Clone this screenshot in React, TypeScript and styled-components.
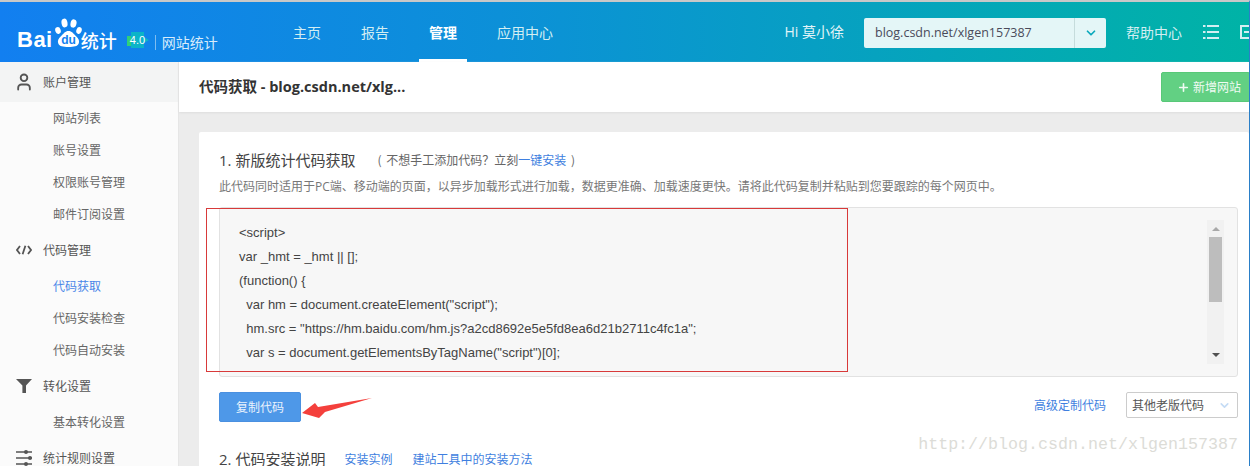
import styled, { createGlobalStyle } from 'styled-components';
import { ChevronDown, Plus, User } from 'lucide-react';

const GlobalStyle = createGlobalStyle`
	html, body {
		margin: 0;
		padding: 0;
		width: 1250px;
		height: 466px;
		overflow: hidden;
		background: #ececec;
		font-family: 'Open Sans', 'Noto Sans CJK SC', sans-serif;
	}
	* { box-sizing: border-box; }
`;

const Page = styled.div`
	position: relative;
	width: 1250px;
	height: 466px;
	overflow: hidden;
	border-top: 2px solid #c8c8c8;
	border-right: 1px solid #2a7fc8;
	display: flex;
	flex-direction: column;
`;

const Header = styled.header`
	height: 60px;
	flex: none;
	display: flex;
	align-items: stretch;
	color: #dff3f5;
	background: linear-gradient(90deg, #127ff0 0%, #0c90d8 40%, #05a5bb 75%, #00b3a6 100%);
`;

const Logo = styled.div`
	width: 283px;
	flex: none;
	display: flex;
	align-items: flex-start;
	padding: 16px 0 0 17px;
	color: #fff;
`;

const LogoWord = styled.span`
	margin-top: 11px;
	font: bold 22px/22px 'Liberation Sans', sans-serif;
	letter-spacing: 0.5px;
`;

const LogoCn = styled.span`
	margin: 11px 0 0 -1px;
	font: 500 18px/22px 'Noto Sans CJK SC', sans-serif;
`;

const VersionBadge = styled.svg`
	margin: 14px 6px 0 10px;
	flex: none;
`;

const ProductName = styled.span`
	margin-top: 17px;
	padding-left: 6px;
	font: 14px/15px 'Noto Sans CJK SC', sans-serif;
	color: #d8ecfb;
	border-left: 1px solid #7fbdf0;
`;

const Nav = styled.nav`
	display: flex;
	flex: 1;
	gap: 20px;
`;

const NavItem = styled.a<{ $active?: boolean }>`
	padding: 0 10px;
	font: ${(p) => (p.$active ? 'bold' : 'normal')} 14px/60px 'Noto Sans CJK SC', sans-serif;
	color: ${(p) => (p.$active ? '#fff' : '#d3eef2')};
	border-bottom: ${(p) => (p.$active ? '3px solid #fff' : 'none')};
`;

const Hello = styled.span`
	font: 14px/60px 'Open Sans', 'Noto Sans CJK SC', sans-serif;
	margin-right: 20px;
	color: #e3f4f8;
`;

const SiteSelect = styled.div`
	width: 242px;
	height: 30px;
	margin-top: 16px;
	margin-right: 20px;
	display: flex;
	background: #e4f6f7;
	border-radius: 2px;
	color: #4a4a5a;
	font-size: 12.5px;
	line-height: 30px;
`;

const SiteName = styled.span`
	flex: 1;
	padding-left: 11px;
	border-right: 1px solid #c5dcdc;
`;

const SiteArrow = styled.span`
	width: 31px;
	display: flex;
	align-items: center;
	justify-content: center;
	color: #0ba9bc;
`;

const HelpLink = styled.span`
	font: 14px/60px 'Noto Sans CJK SC', sans-serif;
	color: #d3eef2;
	margin-right: 21px;
`;

const HeaderIcon = styled.svg`
	flex: none;
	margin-top: 23px;
	margin-left: 0;
	color: #d3eef2;
`;

const ExitIcon = styled(HeaderIcon)`
	margin-left: 21px;
	margin-right: -9px;
`;

const Body = styled.div`
	flex: 1;
	display: flex;
	min-height: 0;
`;

const Sidebar = styled.aside`
	width: 179px;
	flex: none;
	background: #fbfbfb;
	border-right: 1px solid #e6e6e6;
`;

const GroupTitle = styled.div<{ $first?: boolean }>`
	height: 40px;
	display: flex;
	align-items: center;
	background: ${(p) => (p.$first ? '#f3f4f4' : 'transparent')};
	font: 12px/20px 'Noto Sans CJK SC', sans-serif;
	color: #555;
`;

const GroupIcon = styled.span<{ $left?: number }>`
	width: 43px;
	padding-left: ${(p) => p.$left ?? 16}px;
	display: flex;
	color: #555;
`;

const SideLink = styled.a<{ $active?: boolean }>`
	display: block;
	height: 32px;
	padding-left: 53px;
	font: 12px/32px 'Noto Sans CJK SC', sans-serif;
	color: ${(p) => (p.$active ? '#4a86e8' : '#666')};
`;

const Main = styled.main`
	flex: 1;
	min-width: 0;
`;

const TitleBar = styled.div`
	height: 50px;
	background: #fff;
	box-shadow: 0 1px 2px #dedede;
	display: flex;
	align-items: center;
	justify-content: space-between;
	padding-left: 20px;
	font: bold 14.5px/20px 'Open Sans', 'Noto Sans CJK SC', sans-serif;
	color: #333;
`;

const AddButton = styled.a`
	width: 89px;
	height: 30px;
	margin-right: -1px;
	display: flex;
	align-items: center;
	padding-left: 15px;
	gap: 3px;
	background: #62d083;
	border: 1px solid #58c878;
	border-radius: 2px;
	color: #f0fbf3;
	font: 12px/28px 'Noto Sans CJK SC', sans-serif;
`;

const Card = styled.section`
	margin: 20px 0 0 20px;
	height: 400px;
	background: #fff;
	border-radius: 2px;
	padding: 18px 11px 0 20px;
`;

const HeadRow = styled.div`
	display: flex;
	align-items: center;
	height: 20px;
`;

const SectionTitle = styled.h2`
	margin: 0;
	font: normal 15px/20px 'Open Sans', 'Noto Sans CJK SC', sans-serif;
	color: #444;
`;

const Hint = styled.span`
	margin-left: 22px;
	font: 12px/20px 'Noto Sans CJK SC', sans-serif;
	word-spacing: 2px;
	color: #666;
`;

const BlueLink = styled.a`
	color: #3f7fe0;
	font: 12px/20px 'Noto Sans CJK SC', sans-serif;
`;

const Description = styled.p`
	margin: 9px 0 0;
	font: 12px/16px 'Open Sans', 'Noto Sans CJK SC', sans-serif;
	color: #777;
`;

const CodeWrap = styled.div`
	position: relative;
	margin-top: 12px;
	height: 170px;
`;

const CodeBox = styled.div`
	height: 170px;
	display: flex;
	background: #f7f7f7;
	border: 1px solid #e2e2e2;
	border-radius: 3px;
	padding: 12px 13px 0 19px;
`;

const Code = styled.pre`
	flex: 1;
	margin: 1px 0 0;
	font: 13px/24px 'Liberation Sans', sans-serif;
	color: #444;
`;

const Scrollbar = styled.div`
	width: 17px;
	height: 144px;
	background: #f1f1f1;
	display: flex;
	flex-direction: column;
	align-items: center;
	padding: 7px 0 7px;
`;

const ScrollThumb = styled.div`
	width: 13px;
	height: 65px;
	margin-top: 6px;
	margin-bottom: auto;
	background: #bdbdbd;
`;

const ArrowUp = styled.i`
	border: 4px solid transparent;
	border-top: 0;
	border-bottom: 4px solid #a8a8a8;
`;

const ArrowDown = styled.i`
	border: 4px solid transparent;
	border-bottom: 0;
	border-top: 4px solid #505050;
`;

const RedFrame = styled.div`
	position: absolute;
	left: -13px;
	top: 1px;
	width: 642px;
	height: 164px;
	border: 1px solid #d83a3a;
	pointer-events: none;
`;

const ActionRow = styled.div`
	position: relative;
	display: flex;
	align-items: flex-start;
	justify-content: space-between;
	margin-top: 15px;
`;

const CopyButton = styled.a`
	width: 82px;
	height: 30px;
	background: #4e98e8;
	border: 1px solid #4a90e0;
	border-radius: 2px;
	color: #eaf3fd;
	text-align: center;
	font: 12px/28px 'Noto Sans CJK SC', sans-serif;
`;

const ArrowMark = styled.svg`
	position: absolute;
	left: 82px;
	top: -2px;
`;

const RightTools = styled.div`
	display: flex;
	align-items: center;
	gap: 20px;
`;

const OldSelect = styled.div`
	width: 112px;
	height: 26px;
	display: flex;
	align-items: center;
	justify-content: space-between;
	padding: 0 6px 0 5px;
	background: #fff;
	border: 1px solid #ccc;
	border-radius: 2px;
	font: 12px/24px 'Noto Sans CJK SC', sans-serif;
	color: #555;
`;

const SecondRow = styled(HeadRow)`
	margin-top: 27px;
	gap: 20px;

	h2 {
		margin-right: -1px;
	}
`;

const Watermark = styled.div`
	position: absolute;
	right: 11px;
	bottom: 11px;
	font: 16.67px/20px 'Liberation Mono', monospace;
	color: #dcdcd7;
`;

const PawLogo = () => (
	<svg width='28' height='31' viewBox='0 0 28 31' style={{ margin: '0 0 0 1px', flex: 'none' }}>
		<ellipse cx='4' cy='12.5' rx='2.7' ry='3.4' fill='#fff' transform='rotate(-20 4 12.5)' />
		<ellipse cx='10.5' cy='5' rx='3' ry='4.4' fill='#fff' transform='rotate(-10 10.5 5)' />
		<ellipse cx='19.5' cy='5.5' rx='3' ry='4.2' fill='#fff' transform='rotate(12 19.5 5.5)' />
		<ellipse cx='25' cy='12.5' rx='2.6' ry='3.4' fill='#fff' transform='rotate(22 25 12.5)' />
		<path d='M14.5 13c3.4 0 4.8 2.6 7.6 5.2 2.6 2.4 3.6 4.6 2.6 7.4-1.1 3-4.8 3.4-10.2 3.4s-9.1-.4-10.2-3.4c-1-2.8 0-5 2.6-7.4 2.8-2.6 4.2-5.2 7.6-5.2z' fill='#fff' />
		<text x='14.5' y='26' textAnchor='middle' fontSize='12' fontWeight='bold' fontFamily='Liberation Sans' fill='#127ff0'>du</text>
	</svg>
);

const CodeIcon = () => (
	<svg width='16' height='10' viewBox='0 0 16 10' fill='none' stroke='#555' strokeWidth='1.8'>
		<path d='M4 1 1 5l3 4M12 1l3 4-3 4M9.4 .8 6.6 9.2' />
	</svg>
);

const FunnelIcon = () => (
	<svg width='16' height='14' viewBox='0 0 16 14' fill='#555'>
		<path d='M0 0h16l-6 6.5V14H6.4V6.5z' />
	</svg>
);

const SliderIcon = () => (
	<svg width='16' height='16' viewBox='0 0 16 16' fill='#555'>
		<path d='M0 1.2h16v1.5H0zM0 7.2h16v1.5H0zM0 13.2h16v1.5H0z' />
		<circle cx='10' cy='2' r='2' />
		<circle cx='14' cy='8' r='2' />
		<circle cx='10' cy='14' r='2' />
	</svg>
);

const App = () => {
	return (
		<Page>
			<GlobalStyle />
			<Header>
				<Logo>
					<LogoWord>Bai</LogoWord>
					<PawLogo />
					<LogoCn>统计</LogoCn>
					<VersionBadge width='22' height='16' viewBox='0 0 22 16'>
						<rect x='0' y='4' width='8' height='10' fill='#2fd07a' />
						<path d='M4 0h13v5l5 3-5 3v5H4z' fill='#0cb4c8' />
						<text x='10.5' y='12' textAnchor='middle' fontSize='11' fontFamily='Liberation Sans' fill='#fff'>4.0</text>
					</VersionBadge>
					<ProductName>网站统计</ProductName>
				</Logo>
				<Nav>
					<NavItem>主页</NavItem>
					<NavItem>报告</NavItem>
					<NavItem $active>管理</NavItem>
					<NavItem>应用中心</NavItem>
				</Nav>
				<Hello>Hi 莫小徐</Hello>
				<SiteSelect>
					<SiteName>blog.csdn.net/xlgen157387</SiteName>
					<SiteArrow>
						<ChevronDown size={14} strokeWidth={3} />
					</SiteArrow>
				</SiteSelect>
				<HelpLink>帮助中心</HelpLink>
				<HeaderIcon width='16' height='14' viewBox='0 0 16 14' fill='currentColor'>
					<path d='M0 0h2.5v2H0zM4 0h12v2H4zM0 6h2.5v2H0zM4 6h12v2H4zM0 12h2.5v2H0zM4 12h12v2H4z' />
				</HeaderIcon>
				<ExitIcon width='18' height='14' viewBox='0 0 18 14' fill='none' stroke='currentColor' strokeWidth='2'>
					<path d='M14 1H1v12h13M4 7h13' />
				</ExitIcon>
			</Header>
			<Body>
				<Sidebar>
					<GroupTitle $first>
						<GroupIcon $left={14}>
							<User size={20} strokeWidth={2.2} />
						</GroupIcon>
						账户管理
					</GroupTitle>
					<SideLink>网站列表</SideLink>
					<SideLink>账号设置</SideLink>
					<SideLink>权限账号管理</SideLink>
					<SideLink>邮件订阅设置</SideLink>
					<GroupTitle>
						<GroupIcon>
							<CodeIcon />
						</GroupIcon>
						代码管理
					</GroupTitle>
					<SideLink $active>代码获取</SideLink>
					<SideLink>代码安装检查</SideLink>
					<SideLink>代码自动安装</SideLink>
					<GroupTitle>
						<GroupIcon>
							<FunnelIcon />
						</GroupIcon>
						转化设置
					</GroupTitle>
					<SideLink>基本转化设置</SideLink>
					<GroupTitle>
						<GroupIcon>
							<SliderIcon />
						</GroupIcon>
						统计规则设置
					</GroupTitle>
				</Sidebar>
				<Main>
					<TitleBar>
						代码获取 - blog.csdn.net/xlg...
						<AddButton>
							<Plus size={13} strokeWidth={3} />
							新增网站
						</AddButton>
					</TitleBar>
					<Card>
						<HeadRow>
							<SectionTitle>1. 新版统计代码获取</SectionTitle>
							<Hint>
								( 不想手工添加代码？立刻<BlueLink>一键安装</BlueLink> )
							</Hint>
						</HeadRow>
						<Description>
							此代码同时适用于PC端、移动端的页面，以异步加载形式进行加载，数据更准确、加载速度更快。请将此代码复制并粘贴到您要跟踪的每个网页中。
						</Description>
						<CodeWrap>
							<CodeBox>
								<Code>{`<script>
var _hmt = _hmt || [];
(function() {
  var hm = document.createElement("script");
  hm.src = "https://hm.baidu.com/hm.js?a2cd8692e5e5fd8ea6d21b2711c4fc1a";
  var s = document.getElementsByTagName("script")[0];`}</Code>
								<Scrollbar>
									<ArrowUp />
									<ScrollThumb />
									<ArrowDown />
								</Scrollbar>
							</CodeBox>
							<RedFrame />
						</CodeWrap>
						<ActionRow>
							<CopyButton>复制代码</CopyButton>
							<ArrowMark width='72' height='30' viewBox='0 0 72 30'>
								<path d='M1 23 14 13l3 4L71 8 24 22l-6 6z' fill='#f4403c' />
							</ArrowMark>
							<RightTools>
								<BlueLink>高级定制代码</BlueLink>
								<OldSelect>
									其他老版代码
									<ChevronDown size={13} strokeWidth={3} color='#c5dcf5' />
								</OldSelect>
							</RightTools>
						</ActionRow>
						<SecondRow>
							<SectionTitle>2. 代码安装说明</SectionTitle>
							<BlueLink>安装实例</BlueLink>
							<BlueLink>建站工具中的安装方法</BlueLink>
						</SecondRow>
					</Card>
				</Main>
			</Body>
			<Watermark>http://blog.csdn.net/xlgen157387</Watermark>
		</Page>
	);
};

export default App;
